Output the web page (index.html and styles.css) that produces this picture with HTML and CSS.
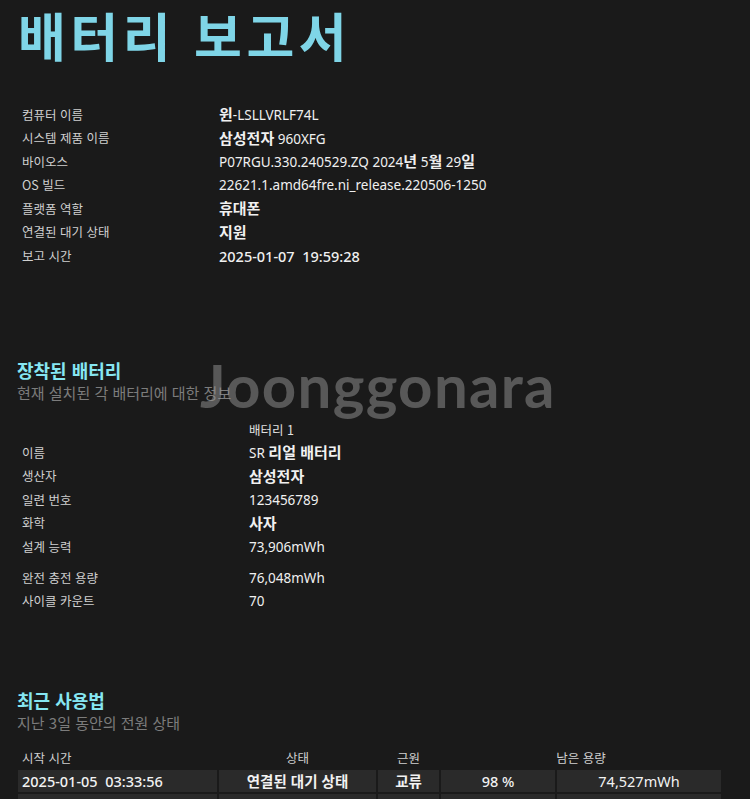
FILE: index.html
```html
<!DOCTYPE html>
<html lang="ko">
<head>
<meta charset="utf-8">
<title>배터리 보고서</title>
<link rel="stylesheet" href="styles.css">
</head>
<body>
<div class="page">
  <h1 class="title">배터리 보고서</h1>

  <div class="info">
    <div class="lbl">컴퓨터 이름</div><div class="val"><b>윈</b>-LSLLVRLF74L</div>
    <div class="lbl">시스템 제품 이름</div><div class="val"><b>삼성전자</b> 960XFG</div>
    <div class="lbl">바이오스</div><div class="val">P07RGU.330.240529.ZQ 2024<b>년</b> 5<b>월</b> 29<b>일</b></div>
    <div class="lbl">OS 빌드</div><div class="val">22621.1.amd64fre.ni_release.220506-1250</div>
    <div class="lbl">플랫폼 역할</div><div class="val"><b>휴대폰</b></div>
    <div class="lbl">연결된 대기 상태</div><div class="val"><b>지원</b></div>
    <div class="lbl">보고 시간</div><div class="val date">2025-01-07&nbsp;&nbsp;19:59:28</div>
  </div>

  <section class="sec sec-battery">
    <h2 class="sec-title">장착된 배터리</h2>
    <p class="sec-sub">현재 설치된 각 배터리에 대한 정보</p>
    <div class="wm">Joonggonara</div>

    <div class="batt">
      <div class="lbl bh"></div><div class="bcol bh">배터리 1</div>
      <div class="lbl">이름</div><div class="val">SR <b>리얼 배터리</b></div>
      <div class="lbl">생산자</div><div class="val"><b>삼성전자</b></div>
      <div class="lbl">일련 번호</div><div class="val">123456789</div>
      <div class="lbl">화학</div><div class="val"><b>사자</b></div>
      <div class="lbl">설계 능력</div><div class="val">73,906mWh</div>
      <div class="lbl gap">완전 충전 용량</div><div class="val gap">76,048mWh</div>
      <div class="lbl">사이클 카운트</div><div class="val">70</div>
    </div>
  </section>

  <section class="sec sec-usage">
    <h2 class="sec-title">최근 사용법</h2>
    <p class="sec-sub">지난 3일 동안의 전원 상태</p>

    <table class="usage">
      <thead>
        <tr>
          <th class="c-start">시작 시간</th>
          <th class="c-state">상태</th>
          <th class="c-src">근원</th>
          <th class="c-cap" colspan="2">남은 용량</th>
        </tr>
      </thead>
      <tbody>
        <tr>
          <td class="c-start">2025-01-05&nbsp;&nbsp;03:33:56</td>
          <td class="c-state kr">연결된 대기 상태</td>
          <td class="c-src kr">교류</td>
          <td class="c-pct">98 %</td>
          <td class="c-mwh">74,527mWh</td>
        </tr>
        <tr>
          <td class="c-start">&nbsp;</td>
          <td class="c-state">&nbsp;</td>
          <td class="c-src">&nbsp;</td>
          <td class="c-pct">&nbsp;</td>
          <td class="c-mwh">&nbsp;</td>
        </tr>
      </tbody>
    </table>
  </section>
</div>
</body>
</html>
```

FILE: styles.css
```css
html, body {
  margin: 0;
  padding: 0;
  background: #1a1a1a;
}

body {
  font-family: "Noto Sans", "Noto Sans CJK KR", sans-serif;
  color: #e6e6e6;
  overflow: hidden;
}

.page {
  position: relative;
  height: 799px;
  overflow: hidden;
}

.title {
  margin: 0;
  padding: 0 0 0 18px;
  height: 78px;
  font-family: "Noto Sans CJK KR", sans-serif;
  font-size: 52px;
  font-weight: 700;
  line-height: 70px;
  letter-spacing: 4.5px;
  color: #7fd5e7;
}

.info,
.batt {
  display: grid;
  grid-auto-rows: 23.5px;
  align-items: center;
  white-space: nowrap;
}

.info {
  margin-top: 25px;
  grid-template-columns: 219px auto;
}

.batt {
  margin-top: 16px;
  grid-template-columns: 249px auto;
  grid-template-rows: 21.5px repeat(5, 23.5px) 31px 23.5px;
}

.lbl,
.val {
  line-height: 20px;
}

.lbl {
  font-family: "Noto Sans CJK KR", sans-serif;
  font-size: 12.5px;
  color: #d0d0d0;
  padding-left: 22px;
}

.val {
  font-size: 13.5px;
  color: #f0f0f0;
}

.val b {
  font-family: "Noto Sans CJK KR", sans-serif;
  font-size: 15px;
  font-weight: 700;
}

.date {
  font-weight: 500;
  font-size: 14.5px;
}

.batt .gap {
  padding-top: 7.5px;
}

.sec {
  position: relative;
}

.sec-battery {
  margin-top: 90px;
}

.sec-title {
  margin: 0;
  padding-left: 17px;
  font-family: "Noto Sans CJK KR", sans-serif;
  font-size: 18px;
  font-weight: 700;
  line-height: 24px;
  color: #86e6f2;
}

.sec-sub {
  margin: 0;
  padding-left: 17px;
  font-family: "Noto Sans CJK KR", sans-serif;
  font-size: 15px;
  line-height: 22px;
  color: #7c7c7c;
}

.wm {
  position: absolute;
  left: 200px;
  top: -3px;
  font-family: "Lato", "Noto Sans", sans-serif;
  font-size: 60px;
  font-weight: 700;
  letter-spacing: 1.3px;
  color: rgba(150, 150, 150, 0.5);
  line-height: 60px;
  pointer-events: none;
}

.bcol {
  font-family: "Noto Sans CJK KR", sans-serif;
  font-size: 12.5px;
  color: #e0e0e0;
  line-height: 20px;
}

.sec-usage {
  margin-top: 75px;
}

.usage {
  margin-top: 12px;
  border-collapse: separate;
  border-spacing: 2px;
  margin-left: 16px;
}

.usage th {
  font-family: "Noto Sans CJK KR", sans-serif;
  font-size: 12.5px;
  font-weight: 400;
  color: #d0d0d0;
  height: 20px;
  line-height: 20px;
  padding: 0;
  text-align: center;
}

.usage th.c-start {
  text-align: left;
  padding-left: 4px;
}

.usage td {
  background: #2a2a2a;
  height: 22px;
  line-height: 20px;
  padding: 0;
  font-size: 14.5px;
  color: #f2f2f2;
  text-align: center;
  white-space: nowrap;
}

.usage td.kr {
  font-family: "Noto Sans CJK KR", sans-serif;
  font-weight: 700;
  font-size: 14.5px;
}

.usage .c-start { width: 195px; }
.usage td.c-start { text-align: left; padding-left: 4px; width: 191px; font-weight: 500; }
.usage .c-state { width: 157px; }
.usage .c-src { width: 61px; }
.usage .c-pct { width: 114px; font-weight: 500; }
.usage .c-mwh { width: 164px; }
```
